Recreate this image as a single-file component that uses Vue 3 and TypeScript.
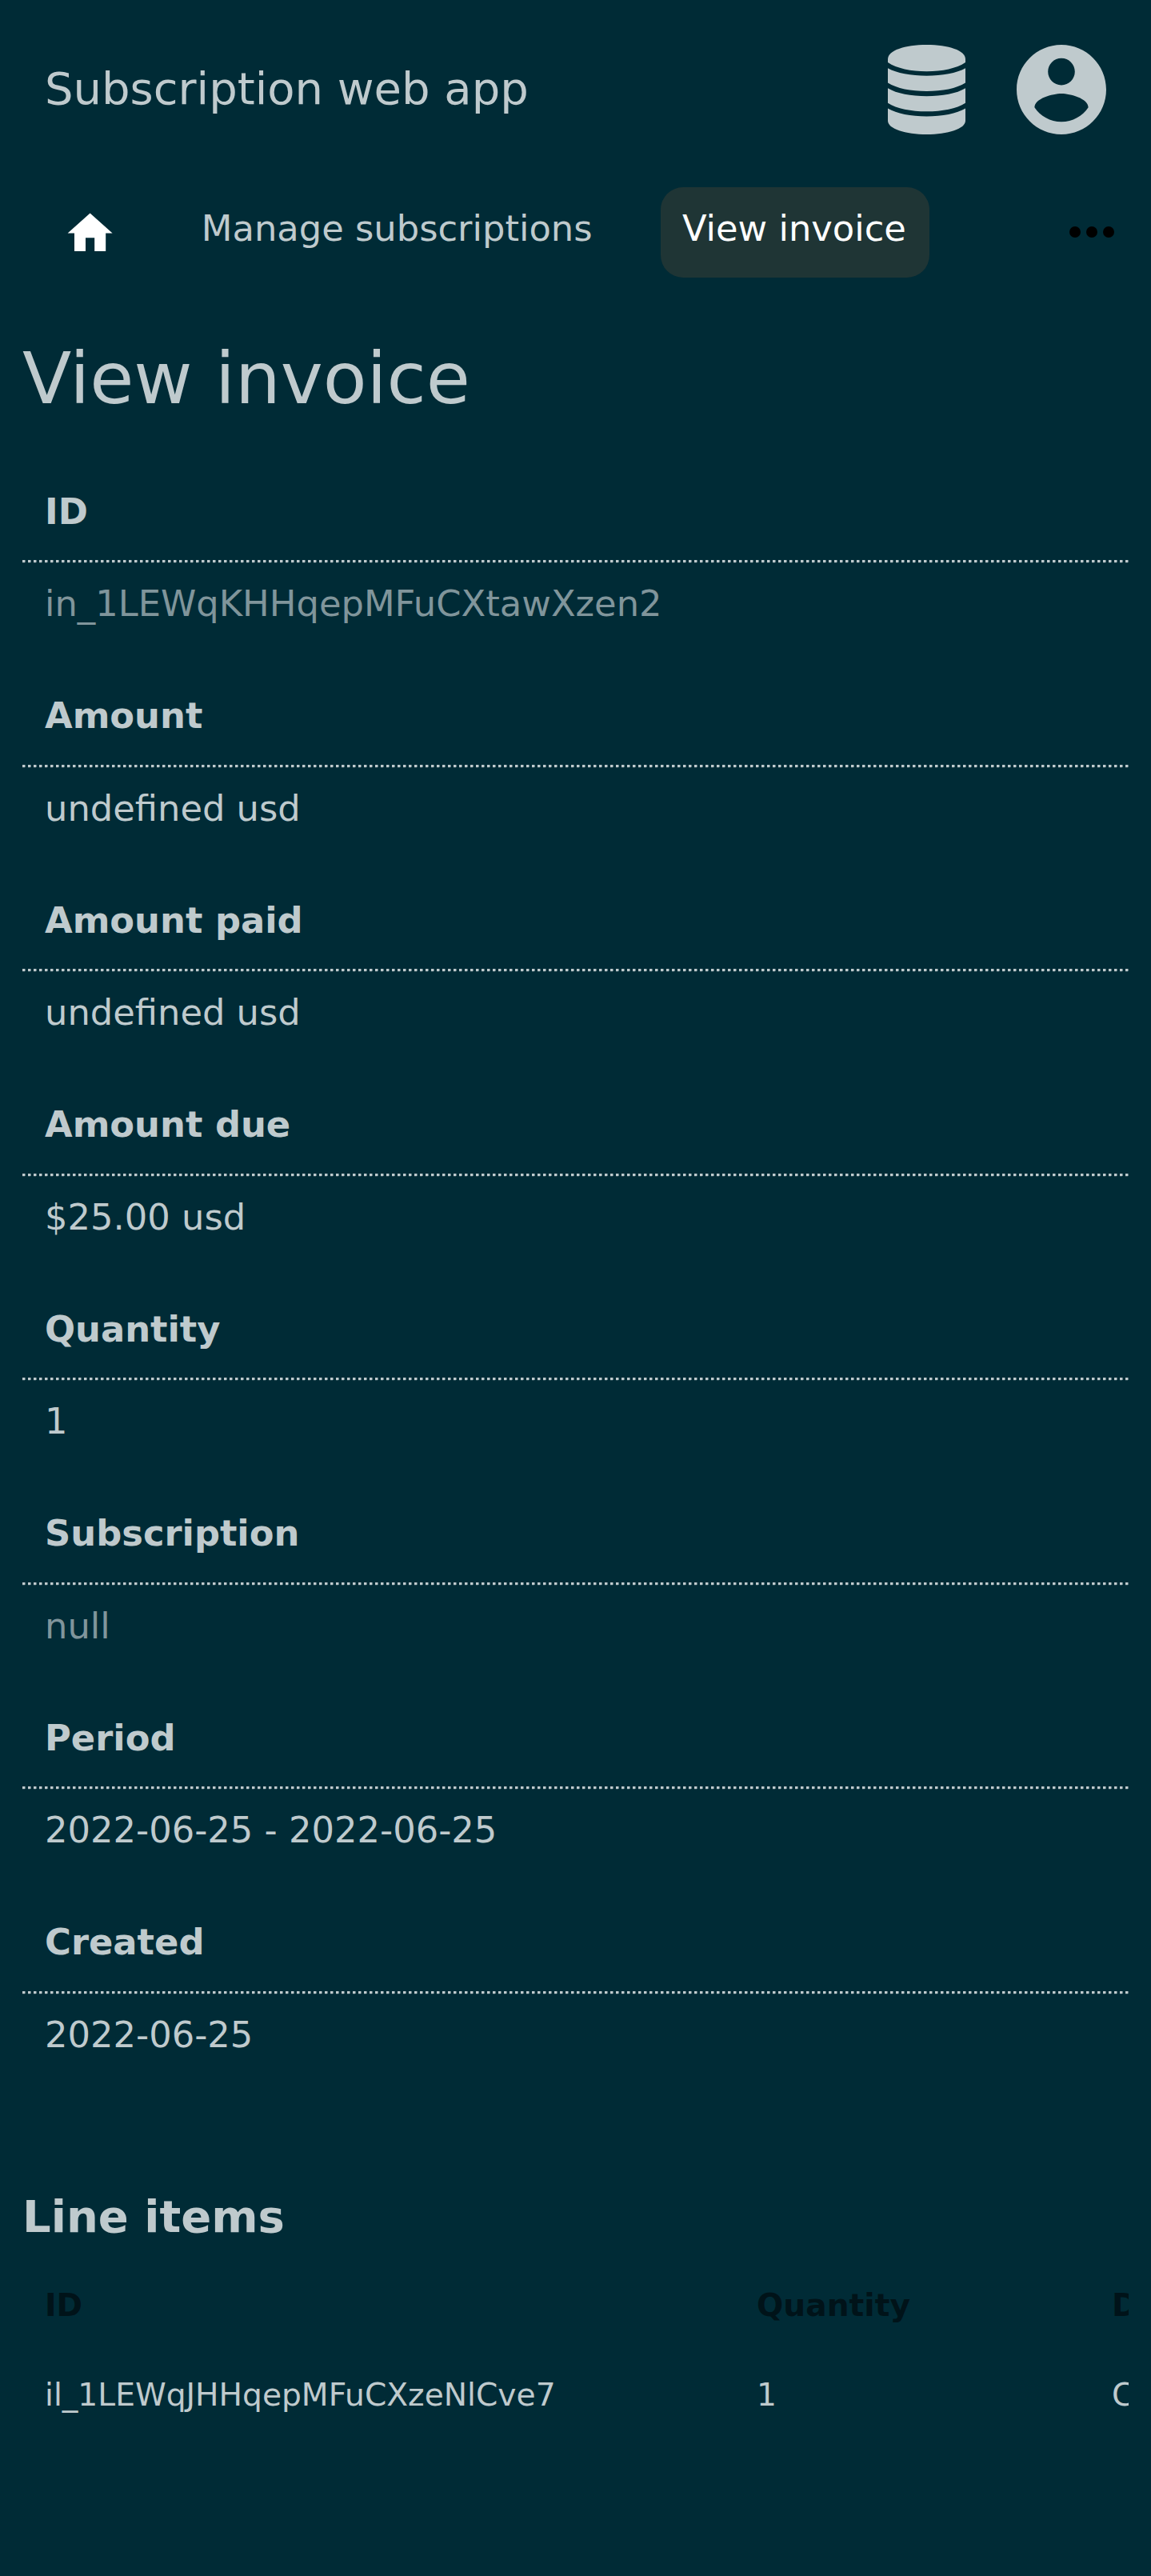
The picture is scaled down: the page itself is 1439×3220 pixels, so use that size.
<script setup lang="ts">
interface Field {
  label: string
  value: string
  muted?: boolean
}

const fields: Field[] = [
  { label: 'ID', value: 'in_1LEWqKHHqepMFuCXtawXzen2', muted: true },
  { label: 'Amount', value: 'undefined usd' },
  { label: 'Amount paid', value: 'undefined usd' },
  { label: 'Amount due', value: '$25.00 usd' },
  { label: 'Quantity', value: '1' },
  { label: 'Subscription', value: 'null', muted: true },
  { label: 'Period', value: '2022-06-25 - 2022-06-25' },
  { label: 'Created', value: '2022-06-25' },
]

const columns: string[] = ['ID', 'Quantity', 'Description']
const items: string[][] = [['il_1LEWqJHHqepMFuCXzeNlCve7', '1', 'Custom item']]
</script>

<template>
  <div class="page">
    <header class="header">
      <div class="brand">Subscription web app</div>
      <svg class="db" viewBox="0 0 97 112">
        <path d="M0 22V18C0 7 21 0 48.500 0S97 7 97 18V22C86 29.500 68 33.300 48.500 33.300S11 29.500 0 22Z" />
        <path d="M0 29.300C11 35.500 29 38.700 48.500 38.700S86 35.500 97 29.300V47.500C86 54.500 68 58 48.500 58S11 54.500 0 47.500Z" />
        <path d="M0 54.300C11 61 29 64.200 48.500 64.200S86 61 97 54.300V72.700C86 79.800 68 83.300 48.500 83.300S11 79.800 0 72.700Z" />
        <path d="M0 79.500C11 86.200 29 89.400 48.500 89.400S86 86.200 97 79.500V95C97 105 75 112 48.500 112S0 105 0 95Z" />
      </svg>
      <svg class="account" viewBox="2 2 20 20">
        <path d="M12 2C6.480 2 2 6.480 2 12s4.480 10 10 10 10-4.480 10-10S17.520 2 12 2zm0 3c1.660 0 3 1.340 3 3s-1.340 3-3 3-3-1.340-3-3 1.340-3 3-3zm0 14.200c-2.500 0-4.710-1.280-6-3.220.03-1.990 4-3.080 6-3.080 1.990 0 5.970 1.090 6 3.080-1.290 1.940-3.500 3.220-6 3.220z" />
      </svg>
    </header>

    <nav class="nav">
      <a class="home">
        <svg viewBox="0 0 24 24"><path d="M10 20v-6h4v6h5v-8h3L12 3 2 12h3v8z" /></svg>
      </a>
      <a class="tab">Manage subscriptions</a>
      <a class="tab active">View invoice</a>
      <svg class="more" viewBox="0 0 24 24">
        <circle cx="6" cy="12" r="2" /><circle cx="12" cy="12" r="2" /><circle cx="18" cy="12" r="2" />
      </svg>
    </nav>

    <main>
      <h1>View invoice</h1>
      <dl>
        <div v-for="f in fields" :key="f.label" class="field">
          <dt>{{ f.label }}</dt>
          <dd :class="{ muted: f.muted }">{{ f.value }}</dd>
        </div>
      </dl>
      <h2>Line items</h2>
      <div class="table">
        <div class="row head">
          <div v-for="c in columns" :key="c" class="cell">{{ c }}</div>
        </div>
        <div v-for="item in items" :key="item[0]" class="row">
          <div v-for="v in item" :key="v" class="cell">{{ v }}</div>
        </div>
      </div>
    </main>
  </div>
</template>

<style>
html,
body {
  background: #002b36;
}
</style>

<style scoped>
.page {
  box-sizing: border-box;
  width: 1439px;
  height: 3220px;
  overflow: hidden;
  background: #002b36;
  color: #bfcacd;
  font-family: 'DejaVu Sans', sans-serif;
  font-size: 44.8px;
}
.header {
  display: flex;
  align-items: center;
  box-sizing: border-box;
  height: 224px;
  padding: 0 56px;
}
.brand {
  flex: 1;
  font-size: 56px;
  line-height: 66px;
  padding-bottom: 2px;
}
.header svg {
  height: 112px;
  fill: #bfcacd;
}
.db {
  width: 97px;
  margin-right: 64px;
}
.account {
  width: 112px;
}
.nav {
  display: flex;
  height: 112.500px;
  margin-top: 10.250px;
  padding-right: 32px;
}
.home {
  width: 67.2px;
  margin: 24.100px 77.800px 0 78.800px;
}
.home svg {
  display: block;
  width: 67.2px;
  height: 67.2px;
  fill: #fff;
}
.tab {
  box-sizing: border-box;
  height: 112.300px;
  padding: 24.800px 28px 0;
  margin-right: 28px;
  border-radius: 28px;
  line-height: 54px;
  white-space: nowrap;
}
.tab:nth-child(2) {
  margin-right: 57px;
}
.active {
  padding-right: 29px;
  padding-left: 27.400px;
  color: #fff;
  background: #1f3535;
}
.more {
  flex: none;
  width: 84px;
  height: 84px;
  margin: 14.100px 0 0 auto;
}
main {
  padding: 0 28px;
}
h1 {
  margin: 74.250px 0 0;
  font-size: 89.6px;
  font-weight: 400;
  line-height: 104px;
}
dl {
  margin: 46.125px 0 0;
}
.field {
  height: 255.5px;
}
dt {
  box-sizing: border-box;
  height: 133px;
  padding: 42.500px 28px 0;
  /* 3.5px dots on a 7px pitch, with a softened lower edge */
  background:
    repeating-linear-gradient(
        90deg,
        #bfcacd 0 3px,
        #607b82 3px 4px,
        transparent 4px 7px
      )
      left bottom 1px / 100% 3px no-repeat,
    repeating-linear-gradient(90deg, #264b54 0 3px, transparent 3px 7px)
      left bottom / 100% 1px no-repeat;
  line-height: 52px;
  font-weight: 700;
}
dd {
  margin: 0;
  padding: 25px 28px 0;
  line-height: 52px;
}
.muted {
  color: #80959b;
}
h2 {
  margin: 122.875px 0 0;
  font-size: 56px;
  line-height: 66px;
}
.table {
  overflow: hidden;
  margin-top: 22px;
  font-size: 39.2px;
}
.row {
  display: grid;
  grid-template-columns: 890px 444px 889px;
  height: 112px;
}
.cell {
  padding: 0 28px;
  line-height: 112px;
  white-space: nowrap;
}
.head {
  color: #001319;
  font-weight: 700;
}
</style>
